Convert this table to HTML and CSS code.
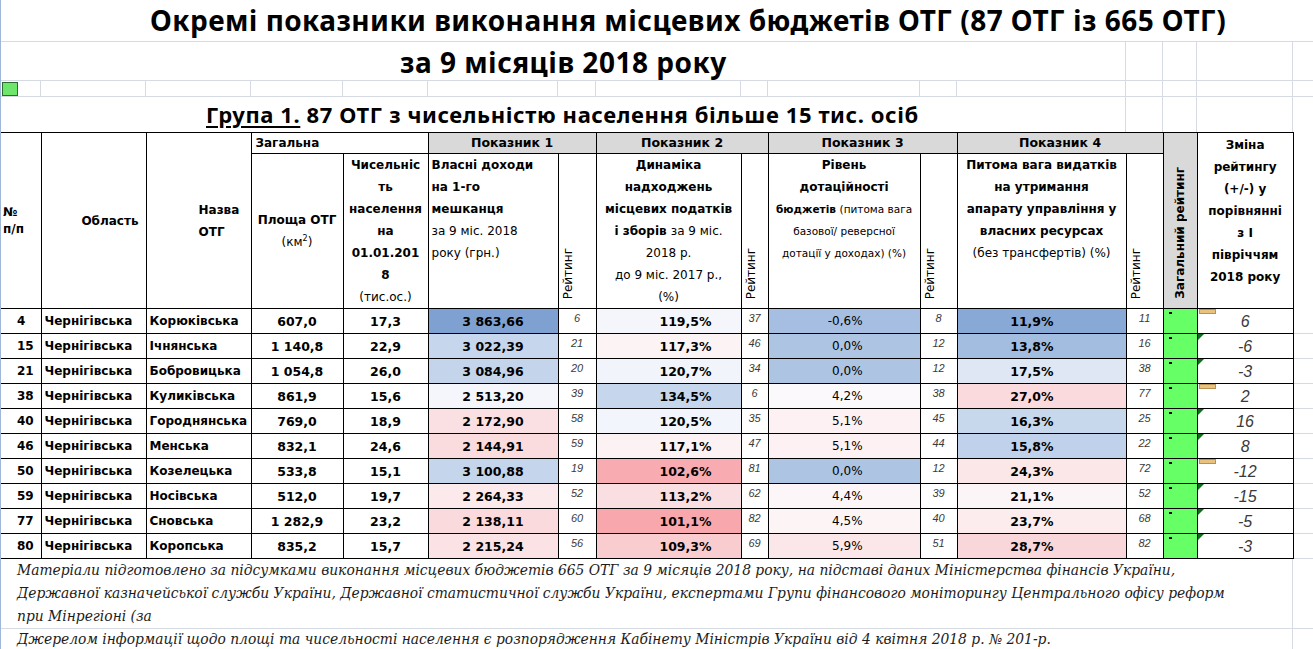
FILE: index.html
```html
<!DOCTYPE html>
<html lang="uk">
<head>
<meta charset="utf-8">
<title>Окремі показники виконання місцевих бюджетів ОТГ</title>
<link rel="stylesheet" href="styles.css">
</head>
<body>
<div class="sheet">
  <div class="top">
    <div class="title1">Окремі показники виконання місцевих бюджетів ОТГ (87 ОТГ із 665 ОТГ)</div>

    <div class="title2 c">за 9 місяців 2018 року</div>
    <div class="c"></div><div class="c"></div><div class="c"></div><div class="c end"></div>

    <div class="c sm"><span class="gsq"></span></div>
    <div class="c sm"></div><div class="c sm"></div><div class="c sm"></div><div class="c sm"></div>
    <div class="c sm"></div><div class="c sm"></div><div class="c sm"></div><div class="c sm"></div>
    <div class="c sm"></div><div class="c sm"></div><div class="c sm"></div><div class="c sm"></div>
    <div class="c sm"></div><div class="c sm"></div><div class="c sm end"></div>

    <div class="group c nb"><u>Група 1.</u> 87 ОТГ з чисельністю населення більше 15 тис. осіб</div>
    <div class="c nb"></div><div class="c nb"></div><div class="c nb"></div><div class="c nb end"></div>
  </div>

  <table class="data">
    <colgroup>
      <col class="w41"><col class="w105"><col class="w105"><col class="w92"><col class="w85">
      <col class="w130"><col class="w38"><col class="w145"><col class="w27"><col class="w152">
      <col class="w37"><col class="w169"><col class="w37"><col class="w34"><col class="w96"><col class="w20">
    </colgroup>
    <thead>
      <tr class="h1">
        <th rowspan="2" class="hn">№<br>п/п</th>
        <th rowspan="2" class="ho">Область</th>
        <th rowspan="2" class="hname">Назва<br>ОТГ</th>
        <th colspan="2" class="hgen">Загальна</th>
        <th colspan="2" class="hp">Показник 1</th>
        <th colspan="2" class="hp">Показник 2</th>
        <th colspan="2" class="hp">Показник 3</th>
        <th colspan="2" class="hp">Показник 4</th>
        <th rowspan="2" class="htot"><div class="vt">Загальний рейтинг</div></th>
        <th rowspan="2" class="hchg">Зміна<br>рейтингу<br>(+/-) у<br>порівнянні<br>з І<br>півріччям<br>2018 року</th>
        <td rowspan="2" class="gap"></td>
      </tr>
      <tr class="h2">
        <th class="harea">Площа ОТГ<br><span class="lt">(км<sup>2</sup>)</span></th>
        <th class="hpop">Чисельніс<br>ть<br>населення<br>на<br>01.01.201<br>8<br><span class="lt">(тис.ос.)</span></th>
        <th class="hind hleft">Власні доходи<br>на 1-го<br>мешканця<br><span class="lt">за 9 міс. 2018<br>року (грн.)</span></th>
        <th class="hr"><div class="vt lt">Рейтинг</div></th>
        <th class="hind">Динаміка<br>надходжень<br>місцевих податків<br>і зборів <span class="lt">за 9 міс.<br>2018 р.<br>до 9 міс. 2017 р.,<br>(%)</span></th>
        <th class="hr"><div class="vt lt">Рейтинг</div></th>
        <th class="hind">Рівень<br>дотаційності<br><span class="small"><b>бюджетів</b> <span class="lt">(питома вага<br>базової/ реверсної<br>дотації у доходах) (%)</span></span></th>
        <th class="hr"><div class="vt lt">Рейтинг</div></th>
        <th class="hind">Питома вага видатків<br>на утримання<br>апарату управління у<br>власних ресурсах<br><span class="lt">(без трансфертів) (%)</span></th>
        <th class="hr"><div class="vt lt">Рейтинг</div></th>
      </tr>
    </thead>
    <tbody>
      <tr>
        <td class="num">4</td><td class="txt">Чернігівська</td><td class="txt">Корюківська</td><td class="ctr">607,0</td><td class="ctr">17,3</td>
        <td class="v1" style="background:#7fa1d1">3 863,66</td><td class="rk">6</td>
        <td class="v2" style="background:#f4f6fb">119,5%</td><td class="rk">37</td>
        <td class="v3" style="background:#a6bee1">-0,6%</td><td class="rk">8</td>
        <td class="v4" style="background:#88a8d6">11,9%</td><td class="rk">11</td>
        <td class="tot"></td><td class="chg"><span class="flag"></span>6</td><td class="gap"></td>
      </tr>
      <tr>
        <td class="num">15</td><td class="txt">Чернігівська</td><td class="txt">Ічнянська</td><td class="ctr">1 140,8</td><td class="ctr">22,9</td>
        <td class="v1" style="background:#c6d6ec">3 022,39</td><td class="rk">21</td>
        <td class="v2" style="background:#fcf3f5">117,3%</td><td class="rk">46</td>
        <td class="v3" style="background:#adc4e3">0,0%</td><td class="rk">12</td>
        <td class="v4" style="background:#a3bde1">13,8%</td><td class="rk">16</td>
        <td class="tot"></td><td class="chg"><span class="tri"></span>-6</td><td class="gap"></td>
      </tr>
      <tr>
        <td class="num">21</td><td class="txt">Чернігівська</td><td class="txt">Бобровицька</td><td class="ctr">1 054,8</td><td class="ctr">26,0</td>
        <td class="v1" style="background:#c3d4eb">3 084,96</td><td class="rk">20</td>
        <td class="v2" style="background:#f1f4fb">120,7%</td><td class="rk">34</td>
        <td class="v3" style="background:#adc4e3">0,0%</td><td class="rk">12</td>
        <td class="v4" style="background:#dfe7f4">17,5%</td><td class="rk">38</td>
        <td class="tot"></td><td class="chg"><span class="tri"></span>-3</td><td class="gap"></td>
      </tr>
      <tr>
        <td class="num">38</td><td class="txt">Чернігівська</td><td class="txt">Куликівська</td><td class="ctr">861,9</td><td class="ctr">15,6</td>
        <td class="v1" style="background:#f4f6fc">2 513,20</td><td class="rk">39</td>
        <td class="v2" style="background:#c6d6ec">134,5%</td><td class="rk">6</td>
        <td class="v3" style="background:#fbf9fc">4,2%</td><td class="rk">38</td>
        <td class="v4" style="background:#fadadd">27,0%</td><td class="rk">77</td>
        <td class="tot"></td><td class="chg"><span class="flag"></span>2</td><td class="gap"></td>
      </tr>
      <tr>
        <td class="num">40</td><td class="txt">Чернігівська</td><td class="txt">Городнянська</td><td class="ctr">769,0</td><td class="ctr">18,9</td>
        <td class="v1" style="background:#fbe0e3">2 172,90</td><td class="rk">58</td>
        <td class="v2" style="background:#f2f5fb">120,5%</td><td class="rk">35</td>
        <td class="v3" style="background:#fdf1f3">5,1%</td><td class="rk">45</td>
        <td class="v4" style="background:#c8d8ec">16,3%</td><td class="rk">25</td>
        <td class="tot"></td><td class="chg"><span class="tri"></span>16</td><td class="gap"></td>
      </tr>
      <tr>
        <td class="num">46</td><td class="txt">Чернігівська</td><td class="txt">Менська</td><td class="ctr">832,1</td><td class="ctr">24,6</td>
        <td class="v1" style="background:#fadbde">2 144,91</td><td class="rk">59</td>
        <td class="v2" style="background:#fcf2f4">117,1%</td><td class="rk">47</td>
        <td class="v3" style="background:#fdf1f3">5,1%</td><td class="rk">44</td>
        <td class="v4" style="background:#c0d2eb">15,8%</td><td class="rk">22</td>
        <td class="tot"></td><td class="chg"><span class="tri"></span>8</td><td class="gap"></td>
      </tr>
      <tr>
        <td class="num">50</td><td class="txt">Чернігівська</td><td class="txt">Козелецька</td><td class="ctr">533,8</td><td class="ctr">15,1</td>
        <td class="v1" style="background:#c5d5eb">3 100,88</td><td class="rk">19</td>
        <td class="v2" style="background:#f8abb0">102,6%</td><td class="rk">81</td>
        <td class="v3" style="background:#adc4e3">0,0%</td><td class="rk">12</td>
        <td class="v4" style="background:#fbe6e8">24,3%</td><td class="rk">72</td>
        <td class="tot"></td><td class="chg"><span class="flag"></span>-12</td><td class="gap"></td>
      </tr>
      <tr>
        <td class="num">59</td><td class="txt">Чернігівська</td><td class="txt">Носівська</td><td class="ctr">512,0</td><td class="ctr">19,7</td>
        <td class="v1" style="background:#fce9eb">2 264,33</td><td class="rk">52</td>
        <td class="v2" style="background:#fadfe2">113,2%</td><td class="rk">62</td>
        <td class="v3" style="background:#fdf6f8">4,4%</td><td class="rk">39</td>
        <td class="v4" style="background:#fcf5f7">21,1%</td><td class="rk">52</td>
        <td class="tot"></td><td class="chg"><span class="tri"></span>-15</td><td class="gap"></td>
      </tr>
      <tr>
        <td class="num">77</td><td class="txt">Чернігівська</td><td class="txt">Сновська</td><td class="ctr">1 282,9</td><td class="ctr">23,2</td>
        <td class="v1" style="background:#fadadd">2 138,11</td><td class="rk">60</td>
        <td class="v2" style="background:#f8a8ad">101,1%</td><td class="rk">82</td>
        <td class="v3" style="background:#fdf4f6">4,5%</td><td class="rk">40</td>
        <td class="v4" style="background:#fcecee">23,7%</td><td class="rk">68</td>
        <td class="tot"></td><td class="chg"><span class="tri"></span>-5</td><td class="gap"></td>
      </tr>
      <tr>
        <td class="num">80</td><td class="txt">Чернігівська</td><td class="txt">Коропська</td><td class="ctr">835,2</td><td class="ctr">15,7</td>
        <td class="v1" style="background:#fbe2e5">2 215,24</td><td class="rk">56</td>
        <td class="v2" style="background:#f9ccd0">109,3%</td><td class="rk">69</td>
        <td class="v3" style="background:#fbe6e9">5,9%</td><td class="rk">51</td>
        <td class="v4" style="background:#f9d6d9">28,7%</td><td class="rk">82</td>
        <td class="tot"></td><td class="chg"><span class="tri"></span>-3</td><td class="gap"></td>
      </tr>
    </tbody>
  </table>

  <div class="notes">
    <div class="note1">
      <div class="line">Матеріали підготовлено за підсумками виконання місцевих бюджетів 665 ОТГ за 9 місяців 2018 року, на підставі даних Міністерства фінансів України,</div>
      <div class="line">Державної казначейської служби України, Державної статистичної служби України, експертами Групи фінансового моніторингу Центрального офісу реформ</div>
      <div class="line">при Мінрегіоні (за</div>
    </div>
    <div class="nend1"></div>
    <div class="note2"><div class="line">Джерелом інформації щодо площі та чисельності населення є розпорядження Кабінету Міністрів України від 4 квітня 2018 р. № 201-р.</div></div>
    <div class="nend2"></div>
  </div>
</div>
</body>
</html>
```

FILE: styles.css
```css
:root {
  --grid: #d5dae3;
  --cols: 41px 105px 105px 92px 85px 130px 38px 145px 27px 152px 37px 169px 37px 34px 96px 20px;
}

* { box-sizing: border-box; }

body {
  margin: 0;
  background: #fff;
  color: #000;
  font-family: "DejaVu Sans", sans-serif;
}

.sheet {
  position: relative;
  width: 1313px;
  height: 649px;
  overflow: hidden;
  background: #fff;
}

.sheet::before {
  content: "";
  position: absolute;
  left: 0;
  top: 0;
  bottom: 0;
  width: 1px;
  background: #9fb7d8;
  z-index: 10;
}

/* ---------- top (title rows) ---------- */
.top {
  display: grid;
  grid-template-columns: var(--cols);
  grid-template-rows: 42px 39px 16px 35px;
}

.c {
  border-right: 1px solid var(--grid);
  border-bottom: 1px solid var(--grid);
}
.c.end { border-right: none; }
.c.nb { border-bottom: none; }

.title1 {
  grid-column: 1 / -1;
  border-bottom: 1px solid var(--grid);
  padding-left: 150px;
  font: 700 28px/41px "Noto Sans", sans-serif;
  letter-spacing: 0.45px;
  white-space: nowrap;
}

.title2 {
  grid-column: 1 / 13;
  padding-left: 400px;
  font: 700 28px/40px "Noto Sans", sans-serif;
  letter-spacing: 0.5px;
  white-space: nowrap;
}

.group {
  grid-column: 1 / 13;
  padding-left: 206px;
  font: 700 22px/34px "Noto Sans", sans-serif;
  letter-spacing: 0.6px;
  white-space: nowrap;
}
.group u { text-underline-offset: 3px; }

.sm { position: relative; }

.gsq {
  display: block;
  width: 16px;
  height: 14px;
  margin: 1px 0 0 2px;
  background: #6ee56b;
  border: 1px solid #2e6b2e;
}

/* ---------- table ---------- */
.data {
  border-collapse: collapse;
  table-layout: fixed;
  width: 1313px;
}

.w41 { width: 41px; } .w105 { width: 105px; } .w92 { width: 92px; } .w85 { width: 85px; }
.w130 { width: 130px; } .w38 { width: 38px; } .w145 { width: 145px; } .w27 { width: 27px; }
.w152 { width: 152px; } .w37 { width: 37px; } .w169 { width: 169px; } .w34 { width: 34px; }
.w96 { width: 96px; } .w20 { width: 20px; }

.data th,
.data td {
  border: 1px solid #000;
  padding: 0;
  overflow: hidden;
  white-space: nowrap;
}

.data th {
  font: 700 12px/22px "DejaVu Sans", sans-serif;
  background: #fff;
}

.data .gap {
  border: none;
  background: transparent;
}
.data tbody .gap { border-bottom: 1px solid var(--grid); }

.data tr > :first-child { border-left: none; }

.h1 { height: 21px; }
.h2 { height: 153px; }

.data .hn {
  text-align: left;
  padding-left: 3px;
  line-height: 17px;
  vertical-align: middle;
}
.data .ho {
  text-align: right;
  padding-right: 7px;
  vertical-align: middle;
}
.data .hname {
  text-align: left;
  padding-left: 52px;
  vertical-align: middle;
}
.data .hgen {
  text-align: left;
  padding-left: 4px;
  line-height: 20px;
}
.data .hp {
  background: #d9d9d9;
  line-height: 20px;
  font-size: 12.5px;
}
.data .htot {
  background: #d9d9d9;
  vertical-align: bottom;
}
.data .hchg {
  vertical-align: top;
  padding-top: 1px;
}
.data .harea { vertical-align: middle; }
.data .hpop { vertical-align: top; }
.data .hind { vertical-align: top; }
.data .hleft { text-align: left; padding-left: 3px; }

.data .hr {
  vertical-align: bottom;
  text-align: left;
}

.vt {
  display: inline-block;
  writing-mode: vertical-rl;
  transform: rotate(180deg);
  line-height: 14px;
  padding-top: 2px;
}
.hr .vt { margin-left: 2px; }

.lt { font-weight: 400; }
.small { font-size: 10.5px; }
.small b { font-weight: 700; }
sup { font-size: 8px; line-height: 0; }

/* data cells */
.data tbody tr { height: 25px; }

.data td {
  font: 700 12px/23px "DejaVu Sans", sans-serif;
  vertical-align: middle;
}

.data .num { text-align: left; padding-left: 17px; }
.data .txt { text-align: left; padding-left: 3px; }
.data .ctr { text-align: center; font-size: 12.5px; }
.data .v1 { text-align: center; font-size: 12.5px; }
.data .v2 { text-align: right; padding-right: 29px; font-size: 12.5px; }
.data .v3 { text-align: right; padding-right: 57px; font-weight: 400; }
.data .v4 { text-align: right; padding-right: 72px; font-size: 12.5px; }

.data td.rk {
  vertical-align: top;
  text-align: center;
  font: italic 400 11px/13px "Liberation Sans", sans-serif;
  color: #3a3a3a;
  padding-top: 3px;
}

.data td.tot {
  background: #66ff66;
  position: relative;
}
.tot::before {
  content: "";
  position: absolute;
  left: 5px;
  top: 3px;
  width: 3px;
  height: 2px;
  background: #000;
}

.data td.chg {
  position: relative;
  text-align: center;
  font: italic 300 16px/23px "Liberation Sans", sans-serif;
  color: #3a3a3a;
}

.flag {
  position: absolute;
  left: 1px;
  top: 0;
  width: 17px;
  height: 5px;
  background: #e9c27e;
  border: 1px solid #b89154;
}

.tri {
  position: absolute;
  left: 0;
  top: 0;
  width: 0;
  height: 0;
  border-top: 6px solid #0d6f19;
  border-right: 6px solid transparent;
}

/* ---------- notes ---------- */
.notes {
  display: grid;
  grid-template-columns: 1293px 20px;
  grid-template-rows: 70px 21px;
}

.note1,
.note2 {
  border-right: 1px solid var(--grid);
  padding-left: 17px;
  font: italic 400 13.85px/23px "DejaVu Serif", serif;
  color: #1c1c1c;
  white-space: nowrap;
}
.note1 { border-bottom: 1px solid var(--grid); }
.nend1 { border-bottom: 1px solid var(--grid); }
.note2 { line-height: 21px; }
.line { white-space: nowrap; }
```
